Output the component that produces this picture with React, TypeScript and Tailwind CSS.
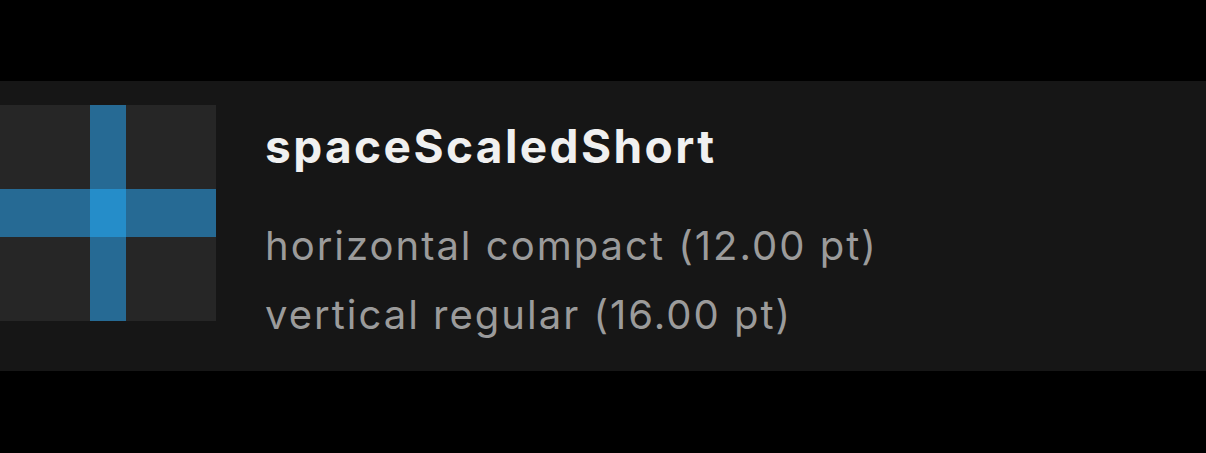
import React from "react";

export default function App() {
  return (
    <div className="w-[1206px] h-[453px] bg-black pt-[81px] overflow-hidden" style={{ fontFamily: "Inter, 'Noto Sans', sans-serif" }}>
      <div className="h-[290px] bg-[#161616] flex items-start">
        <div className="mt-[24px] w-[216px] h-[216px] grid grid-cols-[90px_36px_90px] grid-rows-[84px_48px_84px] shrink-0">
          <div className="bg-[#262626]" />
          <div className="bg-[#266a94]" />
          <div className="bg-[#262626]" />
          <div className="bg-[#266a94]" />
          <div className="bg-[#258dc9]" />
          <div className="bg-[#266a94]" />
          <div className="bg-[#262626]" />
          <div className="bg-[#266a94]" />
          <div className="bg-[#262626]" />
        </div>
        <div className="ml-[49px] flex flex-col">
          <div className="mt-[38px] text-[46px] leading-[54px] font-bold tracking-[2.4px] text-[#f0f0f0]">spaceScaledShort</div>
          <div className="mt-[38px] text-[40px] leading-[69px] tracking-[2px] text-[#9b9b9b]">horizontal compact (12.00 pt)</div>
          <div className="text-[40px] leading-[69px] tracking-[2px] text-[#9b9b9b]">vertical regular (16.00 pt)</div>
        </div>
      </div>
    </div>
  );
}
